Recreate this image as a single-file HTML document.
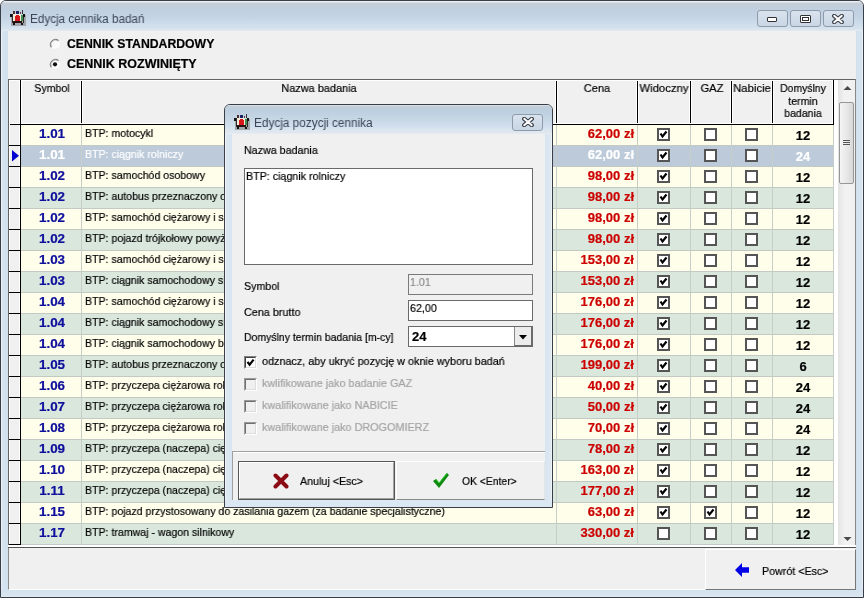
<!DOCTYPE html><html><head><meta charset="utf-8"><style>
*{margin:0;padding:0;box-sizing:border-box}
html,body{width:864px;height:598px;overflow:hidden;background:#fff}
body{position:relative;font-family:"Liberation Sans",sans-serif;font-size:11px;color:#000}
.a{position:absolute}
.t{position:absolute;white-space:nowrap;line-height:1;-webkit-text-stroke:0.2px currentColor;will-change:transform}
.cb{position:absolute;width:13px;height:13px;border:2px solid #555;background:#fff}
.cb svg{position:absolute;left:0;top:0}
.ico{position:absolute}
</style></head><body>
<div class="a" style="left:0;top:0;width:864px;height:598px;background:#d6e3ef;border:1px solid #3a3f47;border-radius:6px 6px 0 0"></div>
<div class="a" style="left:1px;top:1px;width:862px;height:30px;border-radius:5px 5px 0 0;background:linear-gradient(#e9eef4 0px,#e9eef4 1px,#c4cdd7 2px,#c0cfdf 8px,#c4d4e4 16px,#cedeed 24px,#d8e3ec 28px,#e4ebf1 30px)"></div>
<div class="a" style="left:1px;top:31px;width:7px;height:559px;background:linear-gradient(90deg,#e8eff6 0,#e8eff6 1px,#d8e4f0 1px,#d2e0ee 7px)"></div>
<div class="a" style="left:856px;top:31px;width:7px;height:559px;background:linear-gradient(90deg,#d2e0ee 0,#d8e4f0 6px,#e8eff6 6px)"></div>
<div class="a" style="left:1px;top:590px;width:862px;height:7px;background:linear-gradient(#d4e2ef,#dae6f1)"></div>
<div class="a" style="left:8px;top:31px;width:848px;height:559px;background:#f0f0f0"></div>
<svg class="ico" style="left:10px;top:10px" width="16" height="16" viewBox="0 0 16 16" shape-rendering="crispEdges"><rect x="1" y="5" width="15" height="11" fill="#a2a6ab"/><rect x="0" y="4" width="2" height="3" fill="#111"/><rect x="2" y="4" width="1" height="9" fill="#2a2a2a"/><rect x="3" y="4" width="8" height="8" fill="#f3ede0"/><rect x="5" y="6" width="5" height="5" fill="#d81818"/><rect x="6" y="5" width="3" height="7" fill="#d81818"/><rect x="11" y="5" width="2" height="6" fill="#3f9050"/><rect x="13" y="4" width="2" height="3" fill="#111"/><rect x="13" y="7" width="1" height="6" fill="#2a2a2a"/><rect x="6" y="1" width="3" height="3" fill="#1c2466"/><rect x="3" y="1" width="2" height="3" fill="#4a3028"/><rect x="10" y="2" width="1" height="2" fill="#5a3a30"/><rect x="12" y="0" width="1" height="4" fill="#333"/><rect x="3" y="11" width="9" height="2" fill="#2a1010"/><rect x="3" y="13" width="2" height="2" fill="#111"/><rect x="11" y="13" width="2" height="2" fill="#111"/></svg>
<div class="t" style="left:30px;top:12.64px;font-size:12px;color:#3b4756;transform:scaleX(0.975);transform-origin:0 0;-webkit-text-stroke:0">Edycja cennika badań</div>
<div class="a" style="left:757px;top:10px;width:31px;height:17px;border:1px solid #8d9bab;border-radius:3px;background:linear-gradient(#d9e3ee,#c9d6e4)"></div>
<div class="a" style="left:790px;top:10px;width:31px;height:17px;border:1px solid #8d9bab;border-radius:3px;background:linear-gradient(#d9e3ee,#c9d6e4)"></div>
<div class="a" style="left:823px;top:10px;width:31px;height:17px;border:1px solid #8d9bab;border-radius:3px;background:linear-gradient(#d9e3ee,#c9d6e4)"></div>
<div class="a" style="left:767px;top:17px;width:10px;height:5px;border:1px solid #333;background:#fff;border-radius:1px"></div>
<div class="a" style="left:800px;top:15px;width:11px;height:8px;border:1px solid #333;background:#fff;border-radius:1px"></div><div class="a" style="left:802px;top:17px;width:7px;height:4px;border:1px solid #333;background:#fff"></div>
<svg class="a" style="left:832px;top:14px" width="12" height="10" viewBox="0 0 12 10"><path d="M2.2 1.8 L9.8 8.2 M9.8 1.8 L2.2 8.2" stroke="#3a3f48" stroke-width="4.2" stroke-linecap="round"/><path d="M2.2 1.8 L9.8 8.2 M9.8 1.8 L2.2 8.2" stroke="#fff" stroke-width="2" stroke-linecap="round"/></svg>
<svg class="a" style="left:49px;top:38px" width="12" height="12" viewBox="0 0 12 12"><circle cx="6" cy="6" r="5" fill="#fbfbfb"/><path d="M9.6 2.6 A5 5 0 0 0 2.4 9.4" stroke="#7a7a7a" stroke-width="1.1" fill="none"/><path d="M9.6 2.6 A5 5 0 0 0 2.4 9.4" stroke="#b8b8b8" stroke-width="1" fill="none" transform="translate(0.8,0.8) scale(0.87)"/></svg>
<svg class="a" style="left:49px;top:58px" width="12" height="12" viewBox="0 0 12 12"><circle cx="6" cy="6" r="5" fill="#fbfbfb"/><path d="M9.6 2.6 A5 5 0 0 0 2.4 9.4" stroke="#7a7a7a" stroke-width="1.1" fill="none"/><path d="M9.6 2.6 A5 5 0 0 0 2.4 9.4" stroke="#b8b8b8" stroke-width="1" fill="none" transform="translate(0.8,0.8) scale(0.87)"/><circle cx="6" cy="6.3" r="2.1" fill="#111"/></svg>
<div class="t" style="left:67px;top:37.84px;font-size:12px;font-weight:bold;color:#000;transform:scaleX(1.02);transform-origin:0 0;">CENNIK STANDARDOWY</div>
<div class="t" style="left:67px;top:57.84px;font-size:12px;font-weight:bold;color:#000;transform:scaleX(1.04);transform-origin:0 0;">CENNIK ROZWINIĘTY</div>
<div class="a" style="left:8px;top:79px;width:848px;height:469px;background:#fff;border:1px solid #646464;border-right-color:#888"></div>
<div class="a" style="left:9px;top:80px;width:825px;height:44px;background:#f0f0f0"></div>
<div class="a" style="left:9px;top:124px;width:825px;height:1px;background:#000"></div>
<div class="a" style="left:20px;top:80px;width:1px;height:44px;background:#000"></div>
<div class="a" style="left:81px;top:80px;width:1px;height:44px;background:#000"></div>
<div class="a" style="left:556px;top:80px;width:1px;height:44px;background:#000"></div>
<div class="a" style="left:637px;top:80px;width:1px;height:44px;background:#000"></div>
<div class="a" style="left:690px;top:80px;width:1px;height:44px;background:#000"></div>
<div class="a" style="left:731px;top:80px;width:1px;height:44px;background:#000"></div>
<div class="a" style="left:772px;top:80px;width:1px;height:44px;background:#000"></div>
<div class="a" style="left:833px;top:80px;width:1px;height:44px;background:#000"></div>
<div class="a" style="left:9px;top:80px;width:824px;height:1px;background:#fff"></div>
<div class="a" style="left:9px;top:123px;width:824px;height:1px;background:#fff"></div>
<div class="a" style="left:9px;top:80px;width:1px;height:465px;background:#fff"></div>
<div class="a" style="left:19px;top:80px;width:1px;height:44px;background:#fff"></div>
<div class="a" style="left:21px;top:80px;width:1px;height:44px;background:#fff"></div>
<div class="a" style="left:80px;top:80px;width:1px;height:44px;background:#fff"></div>
<div class="a" style="left:82px;top:80px;width:1px;height:44px;background:#fff"></div>
<div class="a" style="left:555px;top:80px;width:1px;height:44px;background:#fff"></div>
<div class="a" style="left:557px;top:80px;width:1px;height:44px;background:#fff"></div>
<div class="a" style="left:636px;top:80px;width:1px;height:44px;background:#fff"></div>
<div class="a" style="left:638px;top:80px;width:1px;height:44px;background:#fff"></div>
<div class="a" style="left:689px;top:80px;width:1px;height:44px;background:#fff"></div>
<div class="a" style="left:691px;top:80px;width:1px;height:44px;background:#fff"></div>
<div class="a" style="left:730px;top:80px;width:1px;height:44px;background:#fff"></div>
<div class="a" style="left:732px;top:80px;width:1px;height:44px;background:#fff"></div>
<div class="a" style="left:771px;top:80px;width:1px;height:44px;background:#fff"></div>
<div class="a" style="left:773px;top:80px;width:1px;height:44px;background:#fff"></div>
<div class="a" style="left:832px;top:80px;width:1px;height:44px;background:#fff"></div>
<div class="t" style="left:-248.5px;width:600px;text-align:center;top:83.07px;font-size:11.5px;color:#000;transform:scaleX(0.92);transform-origin:50% 0;">Symbol</div>
<div class="t" style="left:19.399999999999977px;width:600px;text-align:center;top:82.87px;font-size:11.5px;color:#000;transform:scaleX(0.95);transform-origin:50% 0;">Nazwa badania</div>
<div class="t" style="left:297px;width:600px;text-align:center;top:82.97px;font-size:11.5px;color:#000;transform:scaleX(0.96);transform-origin:50% 0;">Cena</div>
<div class="t" style="left:364px;width:600px;text-align:center;top:82.97px;font-size:11.5px;color:#000;transform:scaleX(0.98);transform-origin:50% 0;">Widoczny</div>
<div class="t" style="left:411.5px;width:600px;text-align:center;top:82.97px;font-size:11.5px;color:#000;transform:scaleX(0.97);transform-origin:50% 0;">GAZ</div>
<div class="t" style="left:452px;width:600px;text-align:center;top:82.97px;font-size:11.5px;color:#000;transform:scaleX(0.98);transform-origin:50% 0;">Nabicie</div>
<div class="t" style="left:502.5px;width:600px;text-align:center;top:83.27px;font-size:11.5px;color:#000;transform:scaleX(0.905);transform-origin:50% 0;">Domyślny</div>
<div class="t" style="left:502.5px;width:600px;text-align:center;top:95.77px;font-size:11.5px;color:#000;transform:scaleX(0.92);transform-origin:50% 0;">termin</div>
<div class="t" style="left:502.5px;width:600px;text-align:center;top:108.47px;font-size:11.5px;color:#000;transform:scaleX(0.92);transform-origin:50% 0;">badania</div>
<div class="a" style="left:21px;top:125px;width:812px;height:20px;background:#fefeea"></div>
<div class="a" style="left:21px;top:145px;width:812px;height:1px;background:#c3c9c3"></div>
<div class="a" style="left:9px;top:145px;width:11px;height:1px;background:#000"></div>
<div class="t" style="left:-248px;width:600px;text-align:center;top:127.00px;font-size:13px;font-weight:bold;color:#0e0e9c;transform:scaleX(1.03);transform-origin:50% 0;">1.01</div>
<div class="t" style="left:85px;top:128.27px;font-size:11.5px;color:#000;transform:scaleX(0.92);transform-origin:0 0;">BTP: motocykl</div>
<div class="t" style="left:34px;width:600px;text-align:right;top:127.00px;font-size:13px;font-weight:bold;color:#cc0000;transform:scaleX(1.0);transform-origin:100% 0;">62,00 zł</div>
<div class="cb" style="left:657px;top:128px;border-color:#555"><svg width="9" height="9" viewBox="0 0 9 9"><path d="M1.5 3.5 L3.5 6.5 L7.5 1.5" stroke="#000" stroke-width="2.2" fill="none" stroke-linejoin="miter"/></svg></div>
<div class="cb" style="left:704px;top:128px;border-color:#555"></div>
<div class="cb" style="left:745px;top:128px;border-color:#555"></div>
<div class="t" style="left:502.5px;width:600px;text-align:center;top:129.00px;font-size:13px;font-weight:bold;color:#000;transform:scaleX(1.0);transform-origin:50% 0;">12</div>
<div class="a" style="left:21px;top:146px;width:812px;height:20px;background:#bccad9"></div>
<div class="a" style="left:21px;top:166px;width:812px;height:1px;background:#c3c9c3"></div>
<div class="a" style="left:9px;top:166px;width:11px;height:1px;background:#000"></div>
<div class="t" style="left:-248px;width:600px;text-align:center;top:148.00px;font-size:13px;font-weight:bold;color:#ffffff;transform:scaleX(1.03);transform-origin:50% 0;">1.01</div>
<div class="t" style="left:85px;top:149.27px;font-size:11.5px;color:#ffffff;transform:scaleX(0.92);transform-origin:0 0;">BTP: ciągnik rolniczy</div>
<div class="t" style="left:34px;width:600px;text-align:right;top:148.00px;font-size:13px;font-weight:bold;color:#ffffff;transform:scaleX(1.0);transform-origin:100% 0;">62,00 zł</div>
<div class="cb" style="left:657px;top:149px;border-color:#555"><svg width="9" height="9" viewBox="0 0 9 9"><path d="M1.5 3.5 L3.5 6.5 L7.5 1.5" stroke="#000" stroke-width="2.2" fill="none" stroke-linejoin="miter"/></svg></div>
<div class="cb" style="left:704px;top:149px;border-color:#555"></div>
<div class="cb" style="left:745px;top:149px;border-color:#555"></div>
<div class="t" style="left:502.5px;width:600px;text-align:center;top:150.00px;font-size:13px;font-weight:bold;color:#ffffff;transform:scaleX(1.0);transform-origin:50% 0;">24</div>
<div class="a" style="left:21px;top:167px;width:812px;height:20px;background:#fefeea"></div>
<div class="a" style="left:21px;top:187px;width:812px;height:1px;background:#c3c9c3"></div>
<div class="a" style="left:9px;top:187px;width:11px;height:1px;background:#000"></div>
<div class="t" style="left:-248px;width:600px;text-align:center;top:169.00px;font-size:13px;font-weight:bold;color:#0e0e9c;transform:scaleX(1.03);transform-origin:50% 0;">1.02</div>
<div class="t" style="left:85px;top:170.27px;font-size:11.5px;color:#000;transform:scaleX(0.92);transform-origin:0 0;">BTP: samochód osobowy</div>
<div class="t" style="left:34px;width:600px;text-align:right;top:169.00px;font-size:13px;font-weight:bold;color:#cc0000;transform:scaleX(1.0);transform-origin:100% 0;">98,00 zł</div>
<div class="cb" style="left:657px;top:170px;border-color:#555"><svg width="9" height="9" viewBox="0 0 9 9"><path d="M1.5 3.5 L3.5 6.5 L7.5 1.5" stroke="#000" stroke-width="2.2" fill="none" stroke-linejoin="miter"/></svg></div>
<div class="cb" style="left:704px;top:170px;border-color:#555"></div>
<div class="cb" style="left:745px;top:170px;border-color:#555"></div>
<div class="t" style="left:502.5px;width:600px;text-align:center;top:171.00px;font-size:13px;font-weight:bold;color:#000;transform:scaleX(1.0);transform-origin:50% 0;">12</div>
<div class="a" style="left:21px;top:188px;width:812px;height:20px;background:#d9e7dc"></div>
<div class="a" style="left:21px;top:208px;width:812px;height:1px;background:#c3c9c3"></div>
<div class="a" style="left:9px;top:208px;width:11px;height:1px;background:#000"></div>
<div class="t" style="left:-248px;width:600px;text-align:center;top:190.00px;font-size:13px;font-weight:bold;color:#0e0e9c;transform:scaleX(1.03);transform-origin:50% 0;">1.02</div>
<div class="t" style="left:85px;top:191.27px;font-size:11.5px;color:#000;transform:scaleX(0.92);transform-origin:0 0;">BTP: autobus przeznaczony do przewozu osób</div>
<div class="t" style="left:34px;width:600px;text-align:right;top:190.00px;font-size:13px;font-weight:bold;color:#cc0000;transform:scaleX(1.0);transform-origin:100% 0;">98,00 zł</div>
<div class="cb" style="left:657px;top:191px;border-color:#555"><svg width="9" height="9" viewBox="0 0 9 9"><path d="M1.5 3.5 L3.5 6.5 L7.5 1.5" stroke="#000" stroke-width="2.2" fill="none" stroke-linejoin="miter"/></svg></div>
<div class="cb" style="left:704px;top:191px;border-color:#555"></div>
<div class="cb" style="left:745px;top:191px;border-color:#555"></div>
<div class="t" style="left:502.5px;width:600px;text-align:center;top:192.00px;font-size:13px;font-weight:bold;color:#000;transform:scaleX(1.0);transform-origin:50% 0;">12</div>
<div class="a" style="left:21px;top:209px;width:812px;height:20px;background:#fefeea"></div>
<div class="a" style="left:21px;top:229px;width:812px;height:1px;background:#c3c9c3"></div>
<div class="a" style="left:9px;top:229px;width:11px;height:1px;background:#000"></div>
<div class="t" style="left:-248px;width:600px;text-align:center;top:211.00px;font-size:13px;font-weight:bold;color:#0e0e9c;transform:scaleX(1.03);transform-origin:50% 0;">1.02</div>
<div class="t" style="left:85px;top:212.27px;font-size:11.5px;color:#000;transform:scaleX(0.92);transform-origin:0 0;">BTP: samochód ciężarowy i specjalny</div>
<div class="t" style="left:34px;width:600px;text-align:right;top:211.00px;font-size:13px;font-weight:bold;color:#cc0000;transform:scaleX(1.0);transform-origin:100% 0;">98,00 zł</div>
<div class="cb" style="left:657px;top:212px;border-color:#555"><svg width="9" height="9" viewBox="0 0 9 9"><path d="M1.5 3.5 L3.5 6.5 L7.5 1.5" stroke="#000" stroke-width="2.2" fill="none" stroke-linejoin="miter"/></svg></div>
<div class="cb" style="left:704px;top:212px;border-color:#555"></div>
<div class="cb" style="left:745px;top:212px;border-color:#555"></div>
<div class="t" style="left:502.5px;width:600px;text-align:center;top:213.00px;font-size:13px;font-weight:bold;color:#000;transform:scaleX(1.0);transform-origin:50% 0;">12</div>
<div class="a" style="left:21px;top:230px;width:812px;height:20px;background:#d9e7dc"></div>
<div class="a" style="left:21px;top:250px;width:812px;height:1px;background:#c3c9c3"></div>
<div class="a" style="left:9px;top:250px;width:11px;height:1px;background:#000"></div>
<div class="t" style="left:-248px;width:600px;text-align:center;top:232.00px;font-size:13px;font-weight:bold;color:#0e0e9c;transform:scaleX(1.03);transform-origin:50% 0;">1.02</div>
<div class="t" style="left:85px;top:233.27px;font-size:11.5px;color:#000;transform:scaleX(0.92);transform-origin:0 0;">BTP: pojazd trójkołowy powyżej</div>
<div class="t" style="left:34px;width:600px;text-align:right;top:232.00px;font-size:13px;font-weight:bold;color:#cc0000;transform:scaleX(1.0);transform-origin:100% 0;">98,00 zł</div>
<div class="cb" style="left:657px;top:233px;border-color:#555"><svg width="9" height="9" viewBox="0 0 9 9"><path d="M1.5 3.5 L3.5 6.5 L7.5 1.5" stroke="#000" stroke-width="2.2" fill="none" stroke-linejoin="miter"/></svg></div>
<div class="cb" style="left:704px;top:233px;border-color:#555"></div>
<div class="cb" style="left:745px;top:233px;border-color:#555"></div>
<div class="t" style="left:502.5px;width:600px;text-align:center;top:234.00px;font-size:13px;font-weight:bold;color:#000;transform:scaleX(1.0);transform-origin:50% 0;">12</div>
<div class="a" style="left:21px;top:251px;width:812px;height:20px;background:#fefeea"></div>
<div class="a" style="left:21px;top:271px;width:812px;height:1px;background:#c3c9c3"></div>
<div class="a" style="left:9px;top:271px;width:11px;height:1px;background:#000"></div>
<div class="t" style="left:-248px;width:600px;text-align:center;top:253.00px;font-size:13px;font-weight:bold;color:#0e0e9c;transform:scaleX(1.03);transform-origin:50% 0;">1.03</div>
<div class="t" style="left:85px;top:254.27px;font-size:11.5px;color:#000;transform:scaleX(0.92);transform-origin:0 0;">BTP: samochód ciężarowy i specjalny</div>
<div class="t" style="left:34px;width:600px;text-align:right;top:253.00px;font-size:13px;font-weight:bold;color:#cc0000;transform:scaleX(1.0);transform-origin:100% 0;">153,00 zł</div>
<div class="cb" style="left:657px;top:254px;border-color:#555"><svg width="9" height="9" viewBox="0 0 9 9"><path d="M1.5 3.5 L3.5 6.5 L7.5 1.5" stroke="#000" stroke-width="2.2" fill="none" stroke-linejoin="miter"/></svg></div>
<div class="cb" style="left:704px;top:254px;border-color:#555"></div>
<div class="cb" style="left:745px;top:254px;border-color:#555"></div>
<div class="t" style="left:502.5px;width:600px;text-align:center;top:255.00px;font-size:13px;font-weight:bold;color:#000;transform:scaleX(1.0);transform-origin:50% 0;">12</div>
<div class="a" style="left:21px;top:272px;width:812px;height:20px;background:#d9e7dc"></div>
<div class="a" style="left:21px;top:292px;width:812px;height:1px;background:#c3c9c3"></div>
<div class="a" style="left:9px;top:292px;width:11px;height:1px;background:#000"></div>
<div class="t" style="left:-248px;width:600px;text-align:center;top:274.00px;font-size:13px;font-weight:bold;color:#0e0e9c;transform:scaleX(1.03);transform-origin:50% 0;">1.03</div>
<div class="t" style="left:85px;top:275.27px;font-size:11.5px;color:#000;transform:scaleX(0.92);transform-origin:0 0;">BTP: ciągnik samochodowy siodłowy</div>
<div class="t" style="left:34px;width:600px;text-align:right;top:274.00px;font-size:13px;font-weight:bold;color:#cc0000;transform:scaleX(1.0);transform-origin:100% 0;">153,00 zł</div>
<div class="cb" style="left:657px;top:275px;border-color:#555"><svg width="9" height="9" viewBox="0 0 9 9"><path d="M1.5 3.5 L3.5 6.5 L7.5 1.5" stroke="#000" stroke-width="2.2" fill="none" stroke-linejoin="miter"/></svg></div>
<div class="cb" style="left:704px;top:275px;border-color:#555"></div>
<div class="cb" style="left:745px;top:275px;border-color:#555"></div>
<div class="t" style="left:502.5px;width:600px;text-align:center;top:276.00px;font-size:13px;font-weight:bold;color:#000;transform:scaleX(1.0);transform-origin:50% 0;">12</div>
<div class="a" style="left:21px;top:293px;width:812px;height:20px;background:#fefeea"></div>
<div class="a" style="left:21px;top:313px;width:812px;height:1px;background:#c3c9c3"></div>
<div class="a" style="left:9px;top:313px;width:11px;height:1px;background:#000"></div>
<div class="t" style="left:-248px;width:600px;text-align:center;top:295.00px;font-size:13px;font-weight:bold;color:#0e0e9c;transform:scaleX(1.03);transform-origin:50% 0;">1.04</div>
<div class="t" style="left:85px;top:296.27px;font-size:11.5px;color:#000;transform:scaleX(0.92);transform-origin:0 0;">BTP: samochód ciężarowy i specjalny</div>
<div class="t" style="left:34px;width:600px;text-align:right;top:295.00px;font-size:13px;font-weight:bold;color:#cc0000;transform:scaleX(1.0);transform-origin:100% 0;">176,00 zł</div>
<div class="cb" style="left:657px;top:296px;border-color:#555"><svg width="9" height="9" viewBox="0 0 9 9"><path d="M1.5 3.5 L3.5 6.5 L7.5 1.5" stroke="#000" stroke-width="2.2" fill="none" stroke-linejoin="miter"/></svg></div>
<div class="cb" style="left:704px;top:296px;border-color:#555"></div>
<div class="cb" style="left:745px;top:296px;border-color:#555"></div>
<div class="t" style="left:502.5px;width:600px;text-align:center;top:297.00px;font-size:13px;font-weight:bold;color:#000;transform:scaleX(1.0);transform-origin:50% 0;">12</div>
<div class="a" style="left:21px;top:314px;width:812px;height:20px;background:#d9e7dc"></div>
<div class="a" style="left:21px;top:334px;width:812px;height:1px;background:#c3c9c3"></div>
<div class="a" style="left:9px;top:334px;width:11px;height:1px;background:#000"></div>
<div class="t" style="left:-248px;width:600px;text-align:center;top:316.00px;font-size:13px;font-weight:bold;color:#0e0e9c;transform:scaleX(1.03);transform-origin:50% 0;">1.04</div>
<div class="t" style="left:85px;top:317.27px;font-size:11.5px;color:#000;transform:scaleX(0.92);transform-origin:0 0;">BTP: ciągnik samochodowy siodłowy</div>
<div class="t" style="left:34px;width:600px;text-align:right;top:316.00px;font-size:13px;font-weight:bold;color:#cc0000;transform:scaleX(1.0);transform-origin:100% 0;">176,00 zł</div>
<div class="cb" style="left:657px;top:317px;border-color:#555"><svg width="9" height="9" viewBox="0 0 9 9"><path d="M1.5 3.5 L3.5 6.5 L7.5 1.5" stroke="#000" stroke-width="2.2" fill="none" stroke-linejoin="miter"/></svg></div>
<div class="cb" style="left:704px;top:317px;border-color:#555"></div>
<div class="cb" style="left:745px;top:317px;border-color:#555"></div>
<div class="t" style="left:502.5px;width:600px;text-align:center;top:318.00px;font-size:13px;font-weight:bold;color:#000;transform:scaleX(1.0);transform-origin:50% 0;">12</div>
<div class="a" style="left:21px;top:335px;width:812px;height:20px;background:#fefeea"></div>
<div class="a" style="left:21px;top:355px;width:812px;height:1px;background:#c3c9c3"></div>
<div class="a" style="left:9px;top:355px;width:11px;height:1px;background:#000"></div>
<div class="t" style="left:-248px;width:600px;text-align:center;top:337.00px;font-size:13px;font-weight:bold;color:#0e0e9c;transform:scaleX(1.03);transform-origin:50% 0;">1.04</div>
<div class="t" style="left:85px;top:338.27px;font-size:11.5px;color:#000;transform:scaleX(0.92);transform-origin:0 0;">BTP: ciągnik samochodowy balastowy</div>
<div class="t" style="left:34px;width:600px;text-align:right;top:337.00px;font-size:13px;font-weight:bold;color:#cc0000;transform:scaleX(1.0);transform-origin:100% 0;">176,00 zł</div>
<div class="cb" style="left:657px;top:338px;border-color:#555"><svg width="9" height="9" viewBox="0 0 9 9"><path d="M1.5 3.5 L3.5 6.5 L7.5 1.5" stroke="#000" stroke-width="2.2" fill="none" stroke-linejoin="miter"/></svg></div>
<div class="cb" style="left:704px;top:338px;border-color:#555"></div>
<div class="cb" style="left:745px;top:338px;border-color:#555"></div>
<div class="t" style="left:502.5px;width:600px;text-align:center;top:339.00px;font-size:13px;font-weight:bold;color:#000;transform:scaleX(1.0);transform-origin:50% 0;">12</div>
<div class="a" style="left:21px;top:356px;width:812px;height:20px;background:#d9e7dc"></div>
<div class="a" style="left:21px;top:376px;width:812px;height:1px;background:#c3c9c3"></div>
<div class="a" style="left:9px;top:376px;width:11px;height:1px;background:#000"></div>
<div class="t" style="left:-248px;width:600px;text-align:center;top:358.00px;font-size:13px;font-weight:bold;color:#0e0e9c;transform:scaleX(1.03);transform-origin:50% 0;">1.05</div>
<div class="t" style="left:85px;top:359.27px;font-size:11.5px;color:#000;transform:scaleX(0.92);transform-origin:0 0;">BTP: autobus przeznaczony do przewozu</div>
<div class="t" style="left:34px;width:600px;text-align:right;top:358.00px;font-size:13px;font-weight:bold;color:#cc0000;transform:scaleX(1.0);transform-origin:100% 0;">199,00 zł</div>
<div class="cb" style="left:657px;top:359px;border-color:#555"><svg width="9" height="9" viewBox="0 0 9 9"><path d="M1.5 3.5 L3.5 6.5 L7.5 1.5" stroke="#000" stroke-width="2.2" fill="none" stroke-linejoin="miter"/></svg></div>
<div class="cb" style="left:704px;top:359px;border-color:#555"></div>
<div class="cb" style="left:745px;top:359px;border-color:#555"></div>
<div class="t" style="left:502.5px;width:600px;text-align:center;top:360.00px;font-size:13px;font-weight:bold;color:#000;transform:scaleX(1.0);transform-origin:50% 0;">6</div>
<div class="a" style="left:21px;top:377px;width:812px;height:20px;background:#fefeea"></div>
<div class="a" style="left:21px;top:397px;width:812px;height:1px;background:#c3c9c3"></div>
<div class="a" style="left:9px;top:397px;width:11px;height:1px;background:#000"></div>
<div class="t" style="left:-248px;width:600px;text-align:center;top:379.00px;font-size:13px;font-weight:bold;color:#0e0e9c;transform:scaleX(1.03);transform-origin:50% 0;">1.06</div>
<div class="t" style="left:85px;top:380.27px;font-size:11.5px;color:#000;transform:scaleX(0.92);transform-origin:0 0;">BTP: przyczepa ciężarowa rolnicza</div>
<div class="t" style="left:34px;width:600px;text-align:right;top:379.00px;font-size:13px;font-weight:bold;color:#cc0000;transform:scaleX(1.0);transform-origin:100% 0;">40,00 zł</div>
<div class="cb" style="left:657px;top:380px;border-color:#555"><svg width="9" height="9" viewBox="0 0 9 9"><path d="M1.5 3.5 L3.5 6.5 L7.5 1.5" stroke="#000" stroke-width="2.2" fill="none" stroke-linejoin="miter"/></svg></div>
<div class="cb" style="left:704px;top:380px;border-color:#555"></div>
<div class="cb" style="left:745px;top:380px;border-color:#555"></div>
<div class="t" style="left:502.5px;width:600px;text-align:center;top:381.00px;font-size:13px;font-weight:bold;color:#000;transform:scaleX(1.0);transform-origin:50% 0;">24</div>
<div class="a" style="left:21px;top:398px;width:812px;height:20px;background:#d9e7dc"></div>
<div class="a" style="left:21px;top:418px;width:812px;height:1px;background:#c3c9c3"></div>
<div class="a" style="left:9px;top:418px;width:11px;height:1px;background:#000"></div>
<div class="t" style="left:-248px;width:600px;text-align:center;top:400.00px;font-size:13px;font-weight:bold;color:#0e0e9c;transform:scaleX(1.03);transform-origin:50% 0;">1.07</div>
<div class="t" style="left:85px;top:401.27px;font-size:11.5px;color:#000;transform:scaleX(0.92);transform-origin:0 0;">BTP: przyczepa ciężarowa rolnicza</div>
<div class="t" style="left:34px;width:600px;text-align:right;top:400.00px;font-size:13px;font-weight:bold;color:#cc0000;transform:scaleX(1.0);transform-origin:100% 0;">50,00 zł</div>
<div class="cb" style="left:657px;top:401px;border-color:#555"><svg width="9" height="9" viewBox="0 0 9 9"><path d="M1.5 3.5 L3.5 6.5 L7.5 1.5" stroke="#000" stroke-width="2.2" fill="none" stroke-linejoin="miter"/></svg></div>
<div class="cb" style="left:704px;top:401px;border-color:#555"></div>
<div class="cb" style="left:745px;top:401px;border-color:#555"></div>
<div class="t" style="left:502.5px;width:600px;text-align:center;top:402.00px;font-size:13px;font-weight:bold;color:#000;transform:scaleX(1.0);transform-origin:50% 0;">24</div>
<div class="a" style="left:21px;top:419px;width:812px;height:20px;background:#fefeea"></div>
<div class="a" style="left:21px;top:439px;width:812px;height:1px;background:#c3c9c3"></div>
<div class="a" style="left:9px;top:439px;width:11px;height:1px;background:#000"></div>
<div class="t" style="left:-248px;width:600px;text-align:center;top:421.00px;font-size:13px;font-weight:bold;color:#0e0e9c;transform:scaleX(1.03);transform-origin:50% 0;">1.08</div>
<div class="t" style="left:85px;top:422.27px;font-size:11.5px;color:#000;transform:scaleX(0.92);transform-origin:0 0;">BTP: przyczepa ciężarowa rolnicza</div>
<div class="t" style="left:34px;width:600px;text-align:right;top:421.00px;font-size:13px;font-weight:bold;color:#cc0000;transform:scaleX(1.0);transform-origin:100% 0;">70,00 zł</div>
<div class="cb" style="left:657px;top:422px;border-color:#555"><svg width="9" height="9" viewBox="0 0 9 9"><path d="M1.5 3.5 L3.5 6.5 L7.5 1.5" stroke="#000" stroke-width="2.2" fill="none" stroke-linejoin="miter"/></svg></div>
<div class="cb" style="left:704px;top:422px;border-color:#555"></div>
<div class="cb" style="left:745px;top:422px;border-color:#555"></div>
<div class="t" style="left:502.5px;width:600px;text-align:center;top:423.00px;font-size:13px;font-weight:bold;color:#000;transform:scaleX(1.0);transform-origin:50% 0;">24</div>
<div class="a" style="left:21px;top:440px;width:812px;height:20px;background:#d9e7dc"></div>
<div class="a" style="left:21px;top:460px;width:812px;height:1px;background:#c3c9c3"></div>
<div class="a" style="left:9px;top:460px;width:11px;height:1px;background:#000"></div>
<div class="t" style="left:-248px;width:600px;text-align:center;top:442.00px;font-size:13px;font-weight:bold;color:#0e0e9c;transform:scaleX(1.03);transform-origin:50% 0;">1.09</div>
<div class="t" style="left:85px;top:443.27px;font-size:11.5px;color:#000;transform:scaleX(0.92);transform-origin:0 0;">BTP: przyczepa (naczepa) ciężarowa</div>
<div class="t" style="left:34px;width:600px;text-align:right;top:442.00px;font-size:13px;font-weight:bold;color:#cc0000;transform:scaleX(1.0);transform-origin:100% 0;">78,00 zł</div>
<div class="cb" style="left:657px;top:443px;border-color:#555"><svg width="9" height="9" viewBox="0 0 9 9"><path d="M1.5 3.5 L3.5 6.5 L7.5 1.5" stroke="#000" stroke-width="2.2" fill="none" stroke-linejoin="miter"/></svg></div>
<div class="cb" style="left:704px;top:443px;border-color:#555"></div>
<div class="cb" style="left:745px;top:443px;border-color:#555"></div>
<div class="t" style="left:502.5px;width:600px;text-align:center;top:444.00px;font-size:13px;font-weight:bold;color:#000;transform:scaleX(1.0);transform-origin:50% 0;">12</div>
<div class="a" style="left:21px;top:461px;width:812px;height:20px;background:#fefeea"></div>
<div class="a" style="left:21px;top:481px;width:812px;height:1px;background:#c3c9c3"></div>
<div class="a" style="left:9px;top:481px;width:11px;height:1px;background:#000"></div>
<div class="t" style="left:-248px;width:600px;text-align:center;top:463.00px;font-size:13px;font-weight:bold;color:#0e0e9c;transform:scaleX(1.03);transform-origin:50% 0;">1.10</div>
<div class="t" style="left:85px;top:464.27px;font-size:11.5px;color:#000;transform:scaleX(0.92);transform-origin:0 0;">BTP: przyczepa (naczepa) ciężarowa</div>
<div class="t" style="left:34px;width:600px;text-align:right;top:463.00px;font-size:13px;font-weight:bold;color:#cc0000;transform:scaleX(1.0);transform-origin:100% 0;">163,00 zł</div>
<div class="cb" style="left:657px;top:464px;border-color:#555"><svg width="9" height="9" viewBox="0 0 9 9"><path d="M1.5 3.5 L3.5 6.5 L7.5 1.5" stroke="#000" stroke-width="2.2" fill="none" stroke-linejoin="miter"/></svg></div>
<div class="cb" style="left:704px;top:464px;border-color:#555"></div>
<div class="cb" style="left:745px;top:464px;border-color:#555"></div>
<div class="t" style="left:502.5px;width:600px;text-align:center;top:465.00px;font-size:13px;font-weight:bold;color:#000;transform:scaleX(1.0);transform-origin:50% 0;">12</div>
<div class="a" style="left:21px;top:482px;width:812px;height:20px;background:#d9e7dc"></div>
<div class="a" style="left:21px;top:502px;width:812px;height:1px;background:#c3c9c3"></div>
<div class="a" style="left:9px;top:502px;width:11px;height:1px;background:#000"></div>
<div class="t" style="left:-248px;width:600px;text-align:center;top:484.00px;font-size:13px;font-weight:bold;color:#0e0e9c;transform:scaleX(1.03);transform-origin:50% 0;">1.11</div>
<div class="t" style="left:85px;top:485.27px;font-size:11.5px;color:#000;transform:scaleX(0.92);transform-origin:0 0;">BTP: przyczepa (naczepa) ciężarowa</div>
<div class="t" style="left:34px;width:600px;text-align:right;top:484.00px;font-size:13px;font-weight:bold;color:#cc0000;transform:scaleX(1.0);transform-origin:100% 0;">177,00 zł</div>
<div class="cb" style="left:657px;top:485px;border-color:#555"><svg width="9" height="9" viewBox="0 0 9 9"><path d="M1.5 3.5 L3.5 6.5 L7.5 1.5" stroke="#000" stroke-width="2.2" fill="none" stroke-linejoin="miter"/></svg></div>
<div class="cb" style="left:704px;top:485px;border-color:#555"></div>
<div class="cb" style="left:745px;top:485px;border-color:#555"></div>
<div class="t" style="left:502.5px;width:600px;text-align:center;top:486.00px;font-size:13px;font-weight:bold;color:#000;transform:scaleX(1.0);transform-origin:50% 0;">12</div>
<div class="a" style="left:21px;top:503px;width:812px;height:20px;background:#fefeea"></div>
<div class="a" style="left:21px;top:523px;width:812px;height:1px;background:#c3c9c3"></div>
<div class="a" style="left:9px;top:523px;width:11px;height:1px;background:#000"></div>
<div class="t" style="left:-248px;width:600px;text-align:center;top:505.00px;font-size:13px;font-weight:bold;color:#0e0e9c;transform:scaleX(1.03);transform-origin:50% 0;">1.15</div>
<div class="t" style="left:85px;top:506.27px;font-size:11.5px;color:#000;transform:scaleX(0.92);transform-origin:0 0;">BTP: pojazd przystosowany do zasilania gazem (za badanie specjalistyczne)</div>
<div class="t" style="left:34px;width:600px;text-align:right;top:505.00px;font-size:13px;font-weight:bold;color:#cc0000;transform:scaleX(1.0);transform-origin:100% 0;">63,00 zł</div>
<div class="cb" style="left:657px;top:506px;border-color:#555"><svg width="9" height="9" viewBox="0 0 9 9"><path d="M1.5 3.5 L3.5 6.5 L7.5 1.5" stroke="#000" stroke-width="2.2" fill="none" stroke-linejoin="miter"/></svg></div>
<div class="cb" style="left:704px;top:506px;border-color:#555"><svg width="9" height="9" viewBox="0 0 9 9"><path d="M1.5 3.5 L3.5 6.5 L7.5 1.5" stroke="#000" stroke-width="2.2" fill="none" stroke-linejoin="miter"/></svg></div>
<div class="cb" style="left:745px;top:506px;border-color:#555"></div>
<div class="t" style="left:502.5px;width:600px;text-align:center;top:507.00px;font-size:13px;font-weight:bold;color:#000;transform:scaleX(1.0);transform-origin:50% 0;">12</div>
<div class="a" style="left:21px;top:524px;width:812px;height:20px;background:#d9e7dc"></div>
<div class="a" style="left:21px;top:544px;width:812px;height:1px;background:#c3c9c3"></div>
<div class="a" style="left:9px;top:544px;width:11px;height:1px;background:#000"></div>
<div class="t" style="left:-248px;width:600px;text-align:center;top:526.00px;font-size:13px;font-weight:bold;color:#0e0e9c;transform:scaleX(1.03);transform-origin:50% 0;">1.17</div>
<div class="t" style="left:85px;top:527.27px;font-size:11.5px;color:#000;transform:scaleX(0.92);transform-origin:0 0;">BTP: tramwaj - wagon silnikowy</div>
<div class="t" style="left:34px;width:600px;text-align:right;top:526.00px;font-size:13px;font-weight:bold;color:#cc0000;transform:scaleX(1.0);transform-origin:100% 0;">330,00 zł</div>
<div class="cb" style="left:657px;top:527px;border-color:#555"></div>
<div class="cb" style="left:704px;top:527px;border-color:#555"></div>
<div class="cb" style="left:745px;top:527px;border-color:#555"></div>
<div class="t" style="left:502.5px;width:600px;text-align:center;top:528.00px;font-size:13px;font-weight:bold;color:#000;transform:scaleX(1.0);transform-origin:50% 0;">12</div>
<div class="a" style="left:81px;top:125px;width:1px;height:420px;background:#c7cdc7"></div>
<div class="a" style="left:556px;top:125px;width:1px;height:420px;background:#c7cdc7"></div>
<div class="a" style="left:637px;top:125px;width:1px;height:420px;background:#c7cdc7"></div>
<div class="a" style="left:690px;top:125px;width:1px;height:420px;background:#c7cdc7"></div>
<div class="a" style="left:731px;top:125px;width:1px;height:420px;background:#c7cdc7"></div>
<div class="a" style="left:772px;top:125px;width:1px;height:420px;background:#c7cdc7"></div>
<div class="a" style="left:833px;top:125px;width:1px;height:420px;background:#c7cdc7"></div>
<div class="a" style="left:20px;top:80px;width:1px;height:465px;background:#000"></div>
<div class="a" style="left:9px;top:125px;width:11px;height:420px;background:#f0f0f0"></div>
<div class="a" style="left:9px;top:125px;width:1px;height:420px;background:#fff"></div>
<div class="a" style="left:19px;top:125px;width:1px;height:420px;background:#fff"></div>
<div class="a" style="left:9px;top:145px;width:11px;height:1px;background:#000"></div>
<div class="a" style="left:9px;top:166px;width:11px;height:1px;background:#000"></div>
<div class="a" style="left:9px;top:187px;width:11px;height:1px;background:#000"></div>
<div class="a" style="left:9px;top:208px;width:11px;height:1px;background:#000"></div>
<div class="a" style="left:9px;top:229px;width:11px;height:1px;background:#000"></div>
<div class="a" style="left:9px;top:250px;width:11px;height:1px;background:#000"></div>
<div class="a" style="left:9px;top:271px;width:11px;height:1px;background:#000"></div>
<div class="a" style="left:9px;top:292px;width:11px;height:1px;background:#000"></div>
<div class="a" style="left:9px;top:313px;width:11px;height:1px;background:#000"></div>
<div class="a" style="left:9px;top:334px;width:11px;height:1px;background:#000"></div>
<div class="a" style="left:9px;top:355px;width:11px;height:1px;background:#000"></div>
<div class="a" style="left:9px;top:376px;width:11px;height:1px;background:#000"></div>
<div class="a" style="left:9px;top:397px;width:11px;height:1px;background:#000"></div>
<div class="a" style="left:9px;top:418px;width:11px;height:1px;background:#000"></div>
<div class="a" style="left:9px;top:439px;width:11px;height:1px;background:#000"></div>
<div class="a" style="left:9px;top:460px;width:11px;height:1px;background:#000"></div>
<div class="a" style="left:9px;top:481px;width:11px;height:1px;background:#000"></div>
<div class="a" style="left:9px;top:502px;width:11px;height:1px;background:#000"></div>
<div class="a" style="left:9px;top:523px;width:11px;height:1px;background:#000"></div>
<div class="a" style="left:9px;top:544px;width:11px;height:1px;background:#000"></div>
<svg class="a" style="left:12px;top:150px" width="8" height="12" viewBox="0 0 8 12"><path d="M0 0 L7 5.75 L0 11.5 Z" fill="#0000d0"/></svg>
<div class="a" style="left:838px;top:80px;width:17px;height:467px;background:linear-gradient(90deg,#e3e3e3,#f2f2f2 40%,#f0f0f0)"></div>
<svg class="a" style="left:843px;top:85px" width="9" height="6" viewBox="0 0 9 6"><path d="M0.5 5 L4.5 1 L8.5 5 Z" fill="#4a4a4a"/></svg>
<svg class="a" style="left:843px;top:536px" width="9" height="6" viewBox="0 0 9 6"><path d="M0.5 1 L4.5 5 L8.5 1 Z" fill="#4a4a4a"/></svg>
<div class="a" style="left:839px;top:102px;width:15px;height:82px;border:1px solid #979797;border-radius:2px;background:linear-gradient(90deg,#f4f4f4,#e8e8e8 50%,#d8d8d8)"></div>
<div class="a" style="left:843px;top:140px;width:7px;height:1px;background:#555"></div>
<div class="a" style="left:843px;top:142px;width:7px;height:1px;background:#555"></div>
<div class="a" style="left:843px;top:144px;width:7px;height:1px;background:#555"></div>
<div class="a" style="left:8px;top:545px;width:848px;height:2px;background:#fff"></div>
<div class="a" style="left:8px;top:547px;width:848px;height:1px;background:#555"></div>
<div class="a" style="left:8px;top:548px;width:848px;height:42px;background:#f0f0f0;border-left:1px solid #8a8a8a;border-bottom:1px solid #fff"></div>
<div class="a" style="left:705px;top:549px;width:151px;height:41px;border-top:1px solid #fff;border-left:1px solid #fff;border-right:1px solid #777;border-bottom:1px solid #777;background:#f0f0f0"></div>
<svg class="a" style="left:735px;top:563px" width="15" height="14" viewBox="0 0 15 14"><path d="M0 7 L7 0 L7 4.3 L14 4.3 L14 9.7 L7 9.7 L7 14 Z" fill="#0000e6"/></svg>
<div class="t" style="left:762px;top:566.27px;font-size:11.5px;color:#000;transform:scaleX(0.93);transform-origin:0 0;">Powrót &lt;Esc&gt;</div>
<div class="a" style="left:224px;top:104px;width:329px;height:404px;background:linear-gradient(#d6e3ef 0,#d6e3ef 395px,#dbe7f2 395px);border:1px solid #3a3f47;border-radius:6px 6px 0 0"></div>
<div class="a" style="left:225px;top:105px;width:327px;height:29px;border-radius:5px 5px 0 0;background:linear-gradient(#dfe6ee 0px,#c4ced8 1.5px,#bccfdf 5px,#c6d6e5 14px,#d2e0ee 22px,#dce6f0 25px,#dfe6ee 27px,#e8edf2 29px)"></div>
<div class="a" style="left:225px;top:134px;width:7px;height:367px;background:linear-gradient(90deg,#eef3f8 0,#eef3f8 1px,#dde8f2 1px,#d8e4f0 7px)"></div>
<div class="a" style="left:545px;top:134px;width:7px;height:367px;background:linear-gradient(90deg,#d8e4f0 0,#dde8f2 6px,#eef3f8 6px)"></div>
<div class="a" style="left:232px;top:134px;width:313px;height:366px;background:#f0f0f0"></div>
<svg class="ico" style="left:234px;top:114px" width="16" height="16" viewBox="0 0 16 16" shape-rendering="crispEdges"><rect x="1" y="5" width="15" height="11" fill="#a2a6ab"/><rect x="0" y="4" width="2" height="3" fill="#111"/><rect x="2" y="4" width="1" height="9" fill="#2a2a2a"/><rect x="3" y="4" width="8" height="8" fill="#f3ede0"/><rect x="5" y="6" width="5" height="5" fill="#d81818"/><rect x="6" y="5" width="3" height="7" fill="#d81818"/><rect x="11" y="5" width="2" height="6" fill="#3f9050"/><rect x="13" y="4" width="2" height="3" fill="#111"/><rect x="13" y="7" width="1" height="6" fill="#2a2a2a"/><rect x="6" y="1" width="3" height="3" fill="#1c2466"/><rect x="3" y="1" width="2" height="3" fill="#4a3028"/><rect x="10" y="2" width="1" height="2" fill="#5a3a30"/><rect x="12" y="0" width="1" height="4" fill="#333"/><rect x="3" y="11" width="9" height="2" fill="#2a1010"/><rect x="3" y="13" width="2" height="2" fill="#111"/><rect x="11" y="13" width="2" height="2" fill="#111"/></svg>
<div class="t" style="left:254px;top:116.64px;font-size:12px;color:#3b4756;transform:scaleX(0.983);transform-origin:0 0;-webkit-text-stroke:0">Edycja pozycji cennika</div>
<div class="a" style="left:512px;top:114px;width:31px;height:17px;border:1px solid #8d9bab;border-radius:3px;background:linear-gradient(#d9e3ee,#c9d6e4)"></div>
<svg class="a" style="left:522px;top:117px" width="12" height="10" viewBox="0 0 12 10"><path d="M2.2 1.8 L9.8 8.2 M9.8 1.8 L2.2 8.2" stroke="#3a3f48" stroke-width="4.2" stroke-linecap="round"/><path d="M2.2 1.8 L9.8 8.2 M9.8 1.8 L2.2 8.2" stroke="#fff" stroke-width="2" stroke-linecap="round"/></svg>
<div class="t" style="left:244px;top:144.97px;font-size:11.5px;color:#000;transform:scaleX(0.93);transform-origin:0 0;">Nazwa badania</div>
<div class="a" style="left:244px;top:168px;width:289px;height:97px;background:#fff;border:1px solid #6a6a6a"></div>
<div class="t" style="left:246px;top:171.07px;font-size:11.5px;color:#000;transform:scaleX(0.93);transform-origin:0 0;">BTP: ciągnik rolniczy</div>
<div class="t" style="left:244px;top:281.07px;font-size:11.5px;color:#000;transform:scaleX(0.925);transform-origin:0 0;">Symbol</div>
<div class="t" style="left:244px;top:307.27px;font-size:11.5px;color:#000;transform:scaleX(0.94);transform-origin:0 0;">Cena brutto</div>
<div class="t" style="left:244px;top:331.57px;font-size:11.5px;color:#000;transform:scaleX(0.91);transform-origin:0 0;">Domyślny termin badania [m-cy]</div>
<div class="a" style="left:408px;top:274px;width:125px;height:21px;background:#f0f0f0;border:1px solid #7a7a7a"></div>
<div class="t" style="left:410px;top:277.07px;font-size:11.5px;color:#8d8d8d;transform:scaleX(0.93);transform-origin:0 0;">1.01</div>
<div class="a" style="left:408px;top:300px;width:125px;height:21px;background:#fff;border:1px solid #6a6a6a"></div>
<div class="t" style="left:410px;top:302.77px;font-size:11.5px;color:#000;transform:scaleX(0.93);transform-origin:0 0;">62,00</div>
<div class="a" style="left:408px;top:326px;width:125px;height:21px;background:#fff;border:1px solid #6a6a6a"></div>
<div class="t" style="left:412px;top:330.30px;font-size:13px;font-weight:bold;color:#000;transform:scaleX(1.0);transform-origin:0 0;">24</div>
<div class="a" style="left:514px;top:327px;width:18px;height:19px;background:#ececec;border-left:1px solid #8a8a8a;border-right:1px solid #6a6a6a;border-bottom:1px solid #6a6a6a"></div>
<svg class="a" style="left:519px;top:335px" width="8" height="5" viewBox="0 0 8 5"><path d="M0 0 L8 0 L4 4.5 Z" fill="#000"/></svg>
<div class="a" style="left:244px;top:356px;width:13px;height:13px;border:1px solid;border-color:#808080 #fff #fff #808080;background:#fff"><div class="a" style="left:0;top:0;width:11px;height:11px;border:1px solid;border-color:#404040 #dcdcdc #dcdcdc #404040"></div><svg class="a" style="left:1px;top:1px" width="9" height="9" viewBox="0 0 9 9"><path d="M1.5 3.8 L3.6 6.6 L7.6 1.6" stroke="#000" stroke-width="2.2" fill="none"/></svg></div>
<div class="t" style="left:262px;top:356.27px;font-size:11.5px;color:#000;transform:scaleX(0.94);transform-origin:0 0;">odznacz, aby ukryć pozycję w oknie wyboru badań</div>
<div class="a" style="left:244px;top:378px;width:13px;height:13px;border:1px solid;border-color:#9a9a9a #fff #fff #9a9a9a;background:#f0f0f0"><div class="a" style="left:0;top:0;width:11px;height:11px;border:1px solid;border-color:#6e6e6e #dcdcdc #dcdcdc #6e6e6e"></div></div>
<div class="t" style="left:262px;top:378.27px;font-size:11.5px;color:#a3a3a3;transform:scaleX(0.94);transform-origin:0 0;">kwlifikowane jako badanie GAZ</div>
<div class="a" style="left:244px;top:400px;width:13px;height:13px;border:1px solid;border-color:#9a9a9a #fff #fff #9a9a9a;background:#f0f0f0"><div class="a" style="left:0;top:0;width:11px;height:11px;border:1px solid;border-color:#6e6e6e #dcdcdc #dcdcdc #6e6e6e"></div></div>
<div class="t" style="left:262px;top:400.27px;font-size:11.5px;color:#a3a3a3;transform:scaleX(0.94);transform-origin:0 0;">kwalifikowane jako NABICIE</div>
<div class="a" style="left:244px;top:422px;width:13px;height:13px;border:1px solid;border-color:#9a9a9a #fff #fff #9a9a9a;background:#f0f0f0"><div class="a" style="left:0;top:0;width:11px;height:11px;border:1px solid;border-color:#6e6e6e #dcdcdc #dcdcdc #6e6e6e"></div></div>
<div class="t" style="left:262px;top:422.27px;font-size:11.5px;color:#a3a3a3;transform:scaleX(0.94);transform-origin:0 0;">kwalifikowane jako DROGOMIERZ</div>
<div class="a" style="left:232px;top:451px;width:313px;height:49px;border-top:1px solid #a0a0a0;border-left:1px solid #a0a0a0;background:#f0f0f0"></div>
<div class="a" style="left:233px;top:452px;width:312px;height:1px;background:#fff"></div>
<div class="a" style="left:238px;top:461px;width:157px;height:39px;border:1px solid #555;background:#f0f0f0"></div>
<div class="a" style="left:239px;top:462px;width:155px;height:37px;border:1px solid #fff;border-right-color:#a0a0a0;border-bottom-color:#a0a0a0"></div>
<svg class="a" style="left:273px;top:473px" width="16" height="16" viewBox="0 0 16 16"><path d="M2.5 2.5 L13.5 13.5 M13.5 2.5 L2.5 13.5" stroke="#8c0a14" stroke-width="4" stroke-linecap="round"/></svg>
<div class="t" style="left:300px;top:476.37px;font-size:11.5px;color:#000;transform:scaleX(0.93);transform-origin:0 0;">Anuluj &lt;Esc&gt;</div>
<div class="a" style="left:396px;top:461px;width:149px;height:39px;border-top:1px solid #fff;border-left:1px solid #fff;border-right:1px solid #e4e4e4;border-bottom:1px solid #8a8a8a;background:#f0f0f0"></div>
<svg class="a" style="left:432px;top:472px" width="18" height="17" viewBox="0 0 18 17"><path d="M1 9 L4 7 L7 11 L15 1 L17 3 L7 16 Z" fill="#118a11"/><path d="M4 7 L7 11 L15 1" stroke="#33cc33" stroke-width="1" fill="none"/></svg>
<div class="t" style="left:462px;top:476.07px;font-size:11.5px;color:#000;transform:scaleX(0.9);transform-origin:0 0;">OK &lt;Enter&gt;</div>
</body></html>
